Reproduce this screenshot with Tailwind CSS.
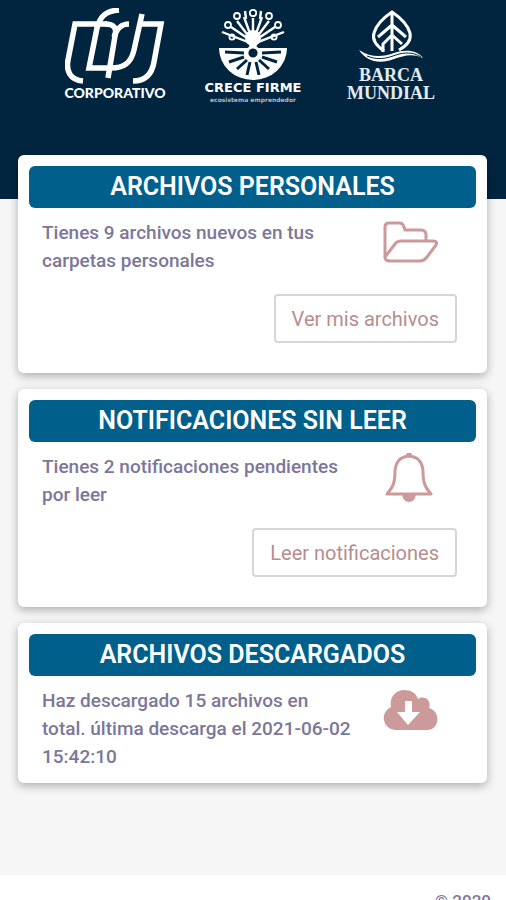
<!DOCTYPE html>
<html lang="es">
<head>
    <meta charset="UTF-8">
    <meta name="viewport" content="width=device-width, initial-scale=1.0">
    <script src="https://cdn.jsdelivr.net/npm/@tailwindcss/browser@4"></script>
    <title>Panel</title>
</head>
<body class="h-screen overflow-hidden bg-white font-[Roboto,sans-serif] text-[#7c7799]">
    <!-- Logos -->
    <header class="bg-[#01253f] h-[199px] flex justify-center items-start gap-[38px] pt-2 text-white">
        <div class="w-[100px] flex flex-col items-center">
            <svg class="w-[100px] h-[77px] shrink-0" viewBox="0 0 100 77" fill="none" stroke="currentColor" stroke-width="5.5">
                <path d="M42 16H10L3 52C1 63 5 72 18 73"/>
                <path d="M54 2C40 3 35 9 32 20L24 60H46C59 60 66 55 69 42L77 6"/>
                <path d="M40 16C49 16 52 20 50 28L43 70"/>
                <path d="M49 29C52 20 56 16 64 16"/>
                <path d="M73 16H96L89 54C87 66 81 73 68 73"/>
            </svg>
            <p class="font-[Lato,sans-serif] font-black text-[14px] leading-4 whitespace-nowrap">CORPORATIVO</p>
        </div>
        <div class="w-[100px] flex flex-col items-center">
            <svg class="w-[100px] h-[72px] shrink-0" viewBox="0 0 100 72" fill="none" stroke="currentColor" stroke-width="2">
                <path stroke-width="2.4" d="M50 36L32 29M50 36L19 24M50 34L28 19M50 34L34 13M50 34L41 9M50 34V10M50 34L59 9M50 34L66 13M50 34L72 19M50 36L81 24M50 36L68 29M43 11L42 3M57 11L58 3"/>
                <g stroke-width="1.8">
                    <circle cx="29" cy="29" r="2.6"/>
                    <circle cx="25" cy="17" r="3"/>
                    <circle cx="34" cy="8" r="3"/>
                    <circle cx="50" cy="5" r="3.2"/>
                    <circle cx="66" cy="8" r="3"/>
                    <circle cx="75" cy="17" r="3"/>
                    <circle cx="71" cy="29" r="2.6"/>
                </g>
                <circle cx="50" cy="30" r="8" fill="currentColor" stroke="none"/>
                <path d="M45 30H55L53 42H47Z" fill="currentColor" stroke="none"/>
                <path d="M16 40H84A34 32 0 0 1 16 40Z" fill="currentColor" stroke="none"/>
                <path stroke="#01253f" stroke-width="3" d="M41 45L22 44M41 49L26 54M44 52L34 61M47 54L44 67M53 54L56 67M56 52L66 61M59 49L74 54M59 45L78 44"/>
                <circle cx="50" cy="45" r="6" fill="#01253f" stroke-width="2.8"/>
            </svg>
            <p class="font-['DejaVu_Sans',sans-serif] font-bold text-[13px] leading-4 whitespace-nowrap">CRECE FIRME</p>
            <p class="font-['DejaVu_Sans',sans-serif] font-bold text-[6px] leading-2 text-[#a9bccb] whitespace-nowrap">ecosistema emprendedor</p>
        </div>
        <div class="w-[100px] flex flex-col items-center">
            <svg class="w-[100px] h-[58px] shrink-0" viewBox="0 0 100 58" fill="none" stroke="currentColor" stroke-width="3">
                <path d="M43 43Q30 34 33 25Q36 14 51 4Q66 14 69 25Q71 35 58 42"/>
                <path d="M51 4V43M51 17L37 29M51 17L65 29M51 27L42 36V44M51 27L61 36"/>
                <path fill="currentColor" stroke="none" d="M18 42C30 50 42 49 53 45C65 41 76 42 82 50C70 45 63 48 53 51C38 57 25 53 18 42Z"/>
                <path stroke="#01253f" stroke-width="1" d="M26 48C40 54 51 48 58 46C67 44 74 45 80 49"/>
            </svg>
            <div class="font-['Liberation_Serif',serif] font-bold text-[18px] leading-[18px] text-center text-[#e3ecf2] whitespace-nowrap">
                <p>BARCA</p>
                <p>MUNDIAL</p>
            </div>
        </div>
    </header>

    <main class="bg-[#f6f6f6] pl-[18px] pr-[19px] pb-[92px]">
        <div class="relative -top-11 -mb-11 flex flex-col gap-4">
            <section class="bg-white rounded-md shadow-[0_3px_10px_rgba(0,0,0,0.3)] px-[11px] pt-[11px] pb-[30px]">
                <h2 class="bg-[#015f8b] text-white font-semibold text-[25px] leading-[42px] text-center rounded-md">ARCHIVOS PERSONALES</h2>
                <div class="flex justify-between pt-[11px] pl-[13px] pr-[38px]">
                    <p class="w-[312px] font-medium text-[19px] leading-7">Tienes 9 archivos nuevos en tus carpetas personales</p>
                    <svg class="w-14 h-14 shrink-0 text-[#cc9a9b]" viewBox="0 0 56 56" fill="none" stroke="currentColor" stroke-width="3" stroke-linejoin="round">
                        <path d="M3 38V8Q3 4 7 4H17Q21 4 22 8L23 11H39Q44 11 44 16V22"/>
                        <path d="M3 38L13 25Q15 22 19 22H51Q56 22 54 26L45 38Q42 42 38 42H8Q3 42 3 38Z"/>
                    </svg>
                </div>
                <div class="flex justify-end pt-[19px] pr-[19px]">
                    <button class="border-2 border-[#d6d6d6] rounded-sm h-[49px] px-4 text-[20px] text-[#b78c8e]">Ver mis archivos</button>
                </div>
            </section>

            <section class="bg-white rounded-md shadow-[0_3px_10px_rgba(0,0,0,0.3)] px-[11px] pt-[11px] pb-[30px]">
                <h2 class="bg-[#015f8b] text-white font-semibold text-[25px] leading-[42px] text-center rounded-md">NOTIFICACIONES SIN LEER</h2>
                <div class="flex justify-between pt-[11px] pl-[13px] pr-[38px]">
                    <p class="w-[312px] font-medium text-[19px] leading-7">Tienes 2 notificaciones pendientes por leer</p>
                    <svg class="w-14 h-14 shrink-0 text-[#cc9a9b]" viewBox="0 0 56 56" fill="none" stroke="currentColor" stroke-width="3" stroke-linejoin="round">
                        <path d="M27 3Q14 4 13 18C13 30 11 34 5 41H49C43 34 41 30 41 18Q40 4 27 3Z"/>
                        <path fill="currentColor" stroke="none" d="M24 3Q24 -1 27 -1T30 3ZM20 41H34Q33 49 27 49T20 41Z"/>
                    </svg>
                </div>
                <div class="flex justify-end pt-[19px] pr-[19px]">
                    <button class="border-2 border-[#d6d6d6] rounded-sm h-[49px] px-4 text-[20px] text-[#b78c8e]">Leer notificaciones</button>
                </div>
            </section>

            <section class="bg-white rounded-md shadow-[0_3px_10px_rgba(0,0,0,0.3)] px-[11px] pt-[11px] pb-3">
                <h2 class="bg-[#015f8b] text-white font-semibold text-[25px] leading-[42px] text-center rounded-md">ARCHIVOS DESCARGADOS</h2>
                <div class="flex justify-between pt-[11px] pl-[13px] pr-[38px]">
                    <p class="w-[312px] font-medium text-[19px] leading-7">Haz descargado 15 archivos en total. última descarga el 2021-06-02 15:42:10</p>
                    <svg class="w-14 h-14 shrink-0 text-[#cc9a9b]" viewBox="0 0 56 56" fill="currentColor">
                        <path d="M13 43A12 12 0 0 1 9 20C7 10 14 3 22 3C29 3 34 6 36 12C42 8 50 13 47 21C59 24 58 43 45 43Z"/>
                        <path fill="#fff" d="M23 14H30V25H38L26 38L15 25H23Z"/>
                    </svg>
                </div>
            </section>
        </div>
    </main>

    <footer class="bg-white px-[15px] py-[14px] text-right font-medium text-[17px] leading-6">© 2020</footer>
</body>
</html>
